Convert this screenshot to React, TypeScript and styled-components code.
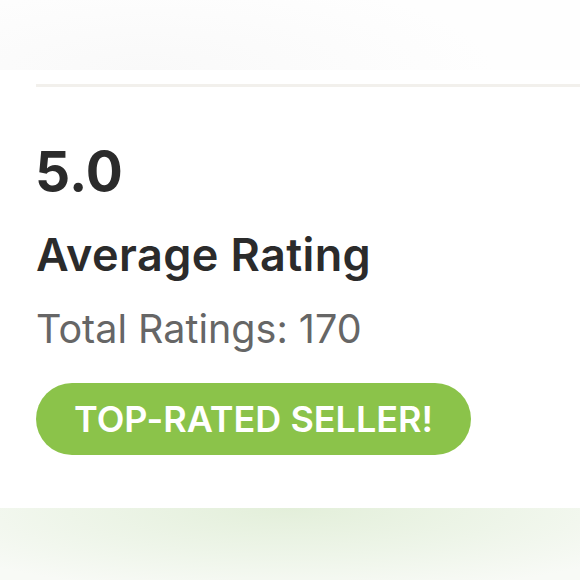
import styled, { createGlobalStyle } from "styled-components";

const GlobalStyle = createGlobalStyle`
  html, body {
    margin: 0;
    padding: 0;
    background: #ffffff;
  }
  body {
    font-family: Inter, "Liberation Sans", sans-serif;
    font-variant-ligatures: none;
  }
`;

export default function App() {
  return (
    <>
      <GlobalStyle />
      <Page>
        <TopBand />
        <Card>
          <Divider />
          <Body>
            <Score>5.0</Score>
            <Title>Average Rating</Title>
            <Count>Total Ratings: 170</Count>
            <Badge>TOP-RATED SELLER!</Badge>
          </Body>
        </Card>
        <BottomBand />
      </Page>
    </>
  );
}

const Page = styled.div`
  width: 580px;
  height: 580px;
  overflow: hidden;
  display: flex;
  flex-direction: column;
`;

const TopBand = styled.div`
  height: 70px;
  flex-shrink: 0;
  background: radial-gradient(ellipse 60% 140% at 25% 100%, #f9f9f9 0%, #fcfcfc 60%, #fefefe 100%);
`;

const Card = styled.section`
  height: 438px;
  flex-shrink: 0;
  padding-left: 36px;
  background: #ffffff;
`;

const Divider = styled.div`
  margin-top: 14px;
  height: 3px;
  background: #f2f0ec;
`;

const Body = styled.div`
  display: flex;
  flex-direction: column;
  align-items: flex-start;
  padding-top: 49px;
`;

const Score = styled.div`
  margin-left: -1px;
  font-size: 55px;
  font-weight: 700;
  line-height: 70px;
  color: #2b2b2b;
`;

const Title = styled.div`
  margin-top: 24px;
  font-size: 45px;
  font-weight: 600;
  line-height: 50px;
  letter-spacing: 0.4px;
  color: #2b2b2b;
`;

const Count = styled.div`
  margin-top: 26px;
  font-size: 39.5px;
  font-weight: 400;
  line-height: 46px;
  color: #666666;
`;

const Badge = styled.div`
  margin-top: 31px;
  height: 72px;
  padding: 0 38px;
  display: flex;
  align-items: center;
  border-radius: 36px;
  background: #8bc34a;
  color: #ffffff;
  font-size: 36px;
  font-weight: 600;
`;

const BottomBand = styled.div`
  flex: 1;
  background: radial-gradient(ellipse 70% 120% at 50% 0%, #e3efda 0%, #eef5e9 55%, #f8faf6 100%);
`;
